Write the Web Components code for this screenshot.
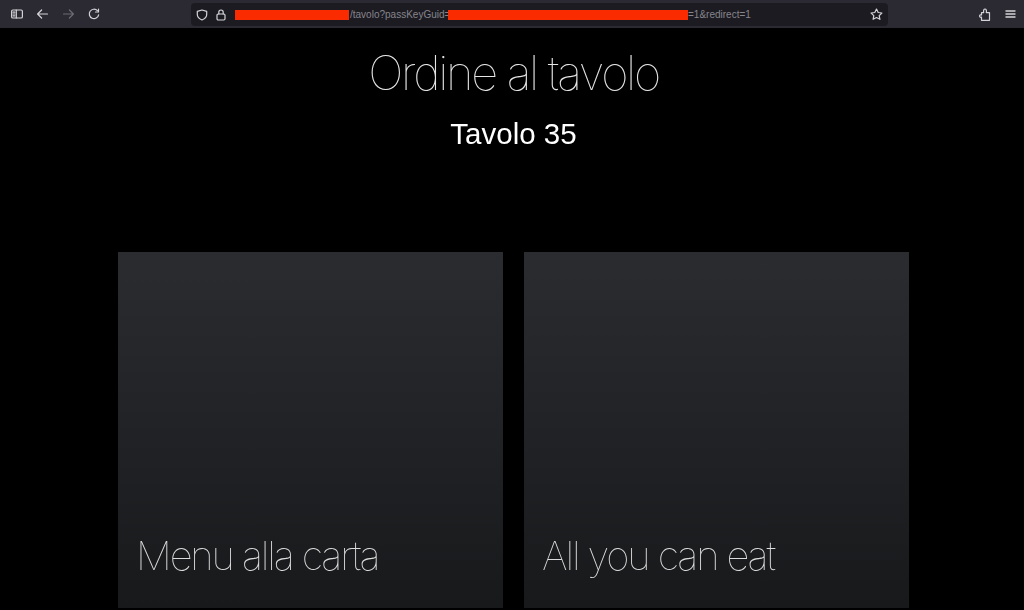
<!DOCTYPE html>
<html lang="it">
<head>
<meta charset="utf-8">
<title>Ordine al tavolo</title>
<style>
  html, body { margin: 0; height: 100%; background: #000; overflow: hidden; }
  body { font-family: "Inter", "Liberation Sans", sans-serif; }
</style>
</head>
<body>
<browser-bar></browser-bar>
<order-page>
  <span slot="title">Ordine al tavolo</span>
  <span slot="table">Tavolo 35</span>
  <menu-card>Menu alla carta</menu-card>
  <menu-card>All you can eat</menu-card>
</order-page>

<script>
class BrowserBar extends HTMLElement {
  connectedCallback() {
    this.attachShadow({ mode: "open" });
    this.shadowRoot.innerHTML = `
      <style>
        :host {
          display: flex;
          align-items: center;
          height: 28px;
          background: #2b2a33;
          color: #d4d4d8;
          font: 10px "Liberation Sans", sans-serif;
        }
        svg { display: block; fill: none; stroke: currentColor; stroke-width: 1.2; stroke-linecap: round; stroke-linejoin: round; flex: none; }
        .nav { display: flex; align-items: center; gap: 13px; padding-left: 11px; width: 191px; flex: none; box-sizing: border-box; }
        .dim { color: #6c6b73; }
        .url {
          display: flex;
          align-items: center;
          box-sizing: border-box;
          width: 697px;
          height: 23px;
          margin-top: 1px;
          padding: 0 5px;
          border-radius: 4px;
          background: #1c1b22;
          flex: none;
        }
        .addr { display: flex; align-items: center; margin-left: 9px; color: #86858c; white-space: nowrap; flex: 1; }
        .path { width: 99px; padding-left: 1px; box-sizing: border-box; }
        .red { display: block; height: 10px; background: #fb2b00; flex: none; }
        .right { display: flex; align-items: center; gap: 14px; margin-left: 91px; }
      </style>
      <div class="nav">
        <svg width="12" height="12" viewBox="0 0 12 12"><rect x=".6" y="2" width="10.8" height="8" rx="1.3"/><path d="M5.300 2v8M2 4.200h1.800M2 6h1.800M2 7.800h1.800"/></svg>
        <svg width="13" height="12" viewBox="0 0 13 12"><path d="M11.500 6H2M5.600 2 1.600 6l4 4"/></svg>
        <svg class="dim" width="13" height="12" viewBox="0 0 13 12"><path d="M1.500 6H11M7.400 2l4 4-4 4"/></svg>
        <svg width="12" height="12" viewBox="0 0 12 12"><path d="M10.600 6.800A4.700 4.700 0 1 1 9.400 2.700"/><path d="M10.500 1v3H7.500" /></svg>
      </div>
      <div class="url">
        <svg width="12" height="12" viewBox="0 0 12 12"><path d="M6 1 1.300 2.400v3.200c0 2.600 2 4.300 4.700 5.400 2.700-1.100 4.700-2.800 4.700-5.400V2.400z"/></svg>
        <svg style="margin-left:8px" width="10" height="12" viewBox="0 0 10 12"><rect x="1" y="5" width="8" height="6" rx="1.2"/><path d="M2.800 5V3.200a2.200 2.200 0 0 1 4.400 0V5"/></svg>
        <div class="addr">
          <span class="red" style="width:114px"></span><span class="path">/tavolo?passKeyGuid=</span><span class="red" style="width:240px"></span><span>=1&amp;redirect=1</span>
        </div>
        <svg width="13" height="13" viewBox="0 0 13 13"><path d="m6.500 1.100 1.700 3.400 3.700.5-2.700 2.600.7 3.700-3.400-1.800-3.400 1.800.7-3.700L1.100 5l3.700-.5z"/></svg>
      </div>
      <div class="right">
        <svg width="12" height="13" viewBox="0 0 12 13"><path d="M2.500 12.300V9.200C1.200 9.500.6 9 .6 8.100s.6-1.400 1.900-1.100V4.600h2.200C4.200 2.600 4.900 1 6 1s1.800 1.600 1.300 3.600h3.200v7.700z"/></svg>
        <svg width="11" height="10" viewBox="0 0 11 10" style="stroke-width:1.400"><path d="M1 2h9M1 5h9M1 8h9"/></svg>
      </div>
    `;
  }
}

class OrderPage extends HTMLElement {
  connectedCallback() {
    this.attachShadow({ mode: "open" });
    this.shadowRoot.innerHTML = `
      <style>
        :host {
          display: block;
          box-sizing: border-box;
          padding: 0 115px 0 118px;
          color: #fff;
          text-align: center;
        }
        h1 {
          margin: 0;
          padding-top: 15px;
          font-size: 47px;
          line-height: 60px;
          font-weight: 100;
          letter-spacing: -2.3px;
          color: #e6e6e6;
          will-change: opacity;
        }
        h2 {
          margin: 0;
          padding-top: 11px;
          font: 400 29.5px/40px "Liberation Sans", sans-serif;
          will-change: opacity;
        }
        .cards {
          display: grid;
          grid-template-columns: 385px 385px;
          gap: 21px;
          margin-top: 98px;
        }
      </style>
      <h1><slot name="title"></slot></h1>
      <h2><slot name="table"></slot></h2>
      <div class="cards"><slot></slot></div>
    `;
  }
}

class MenuCard extends HTMLElement {
  connectedCallback() {
    this.attachShadow({ mode: "open" });
    this.shadowRoot.innerHTML = `
      <style>
        :host {
          display: flex;
          align-items: flex-end;
          box-sizing: border-box;
          height: 356px;
          padding: 0 18px 28px;
          background: linear-gradient(#2a2c30 0%, #18191b 100%);
          color: #dcdcdc;
          text-align: left;
          font-size: 40px;
          line-height: 48px;
          font-weight: 100;
          letter-spacing: -2.15px;
        }
        span { will-change: opacity; }
      </style>
      <span><slot></slot></span>
    `;
  }
}

customElements.define("browser-bar", BrowserBar);
customElements.define("order-page", OrderPage);
customElements.define("menu-card", MenuCard);
</script>
</body>
</html>
